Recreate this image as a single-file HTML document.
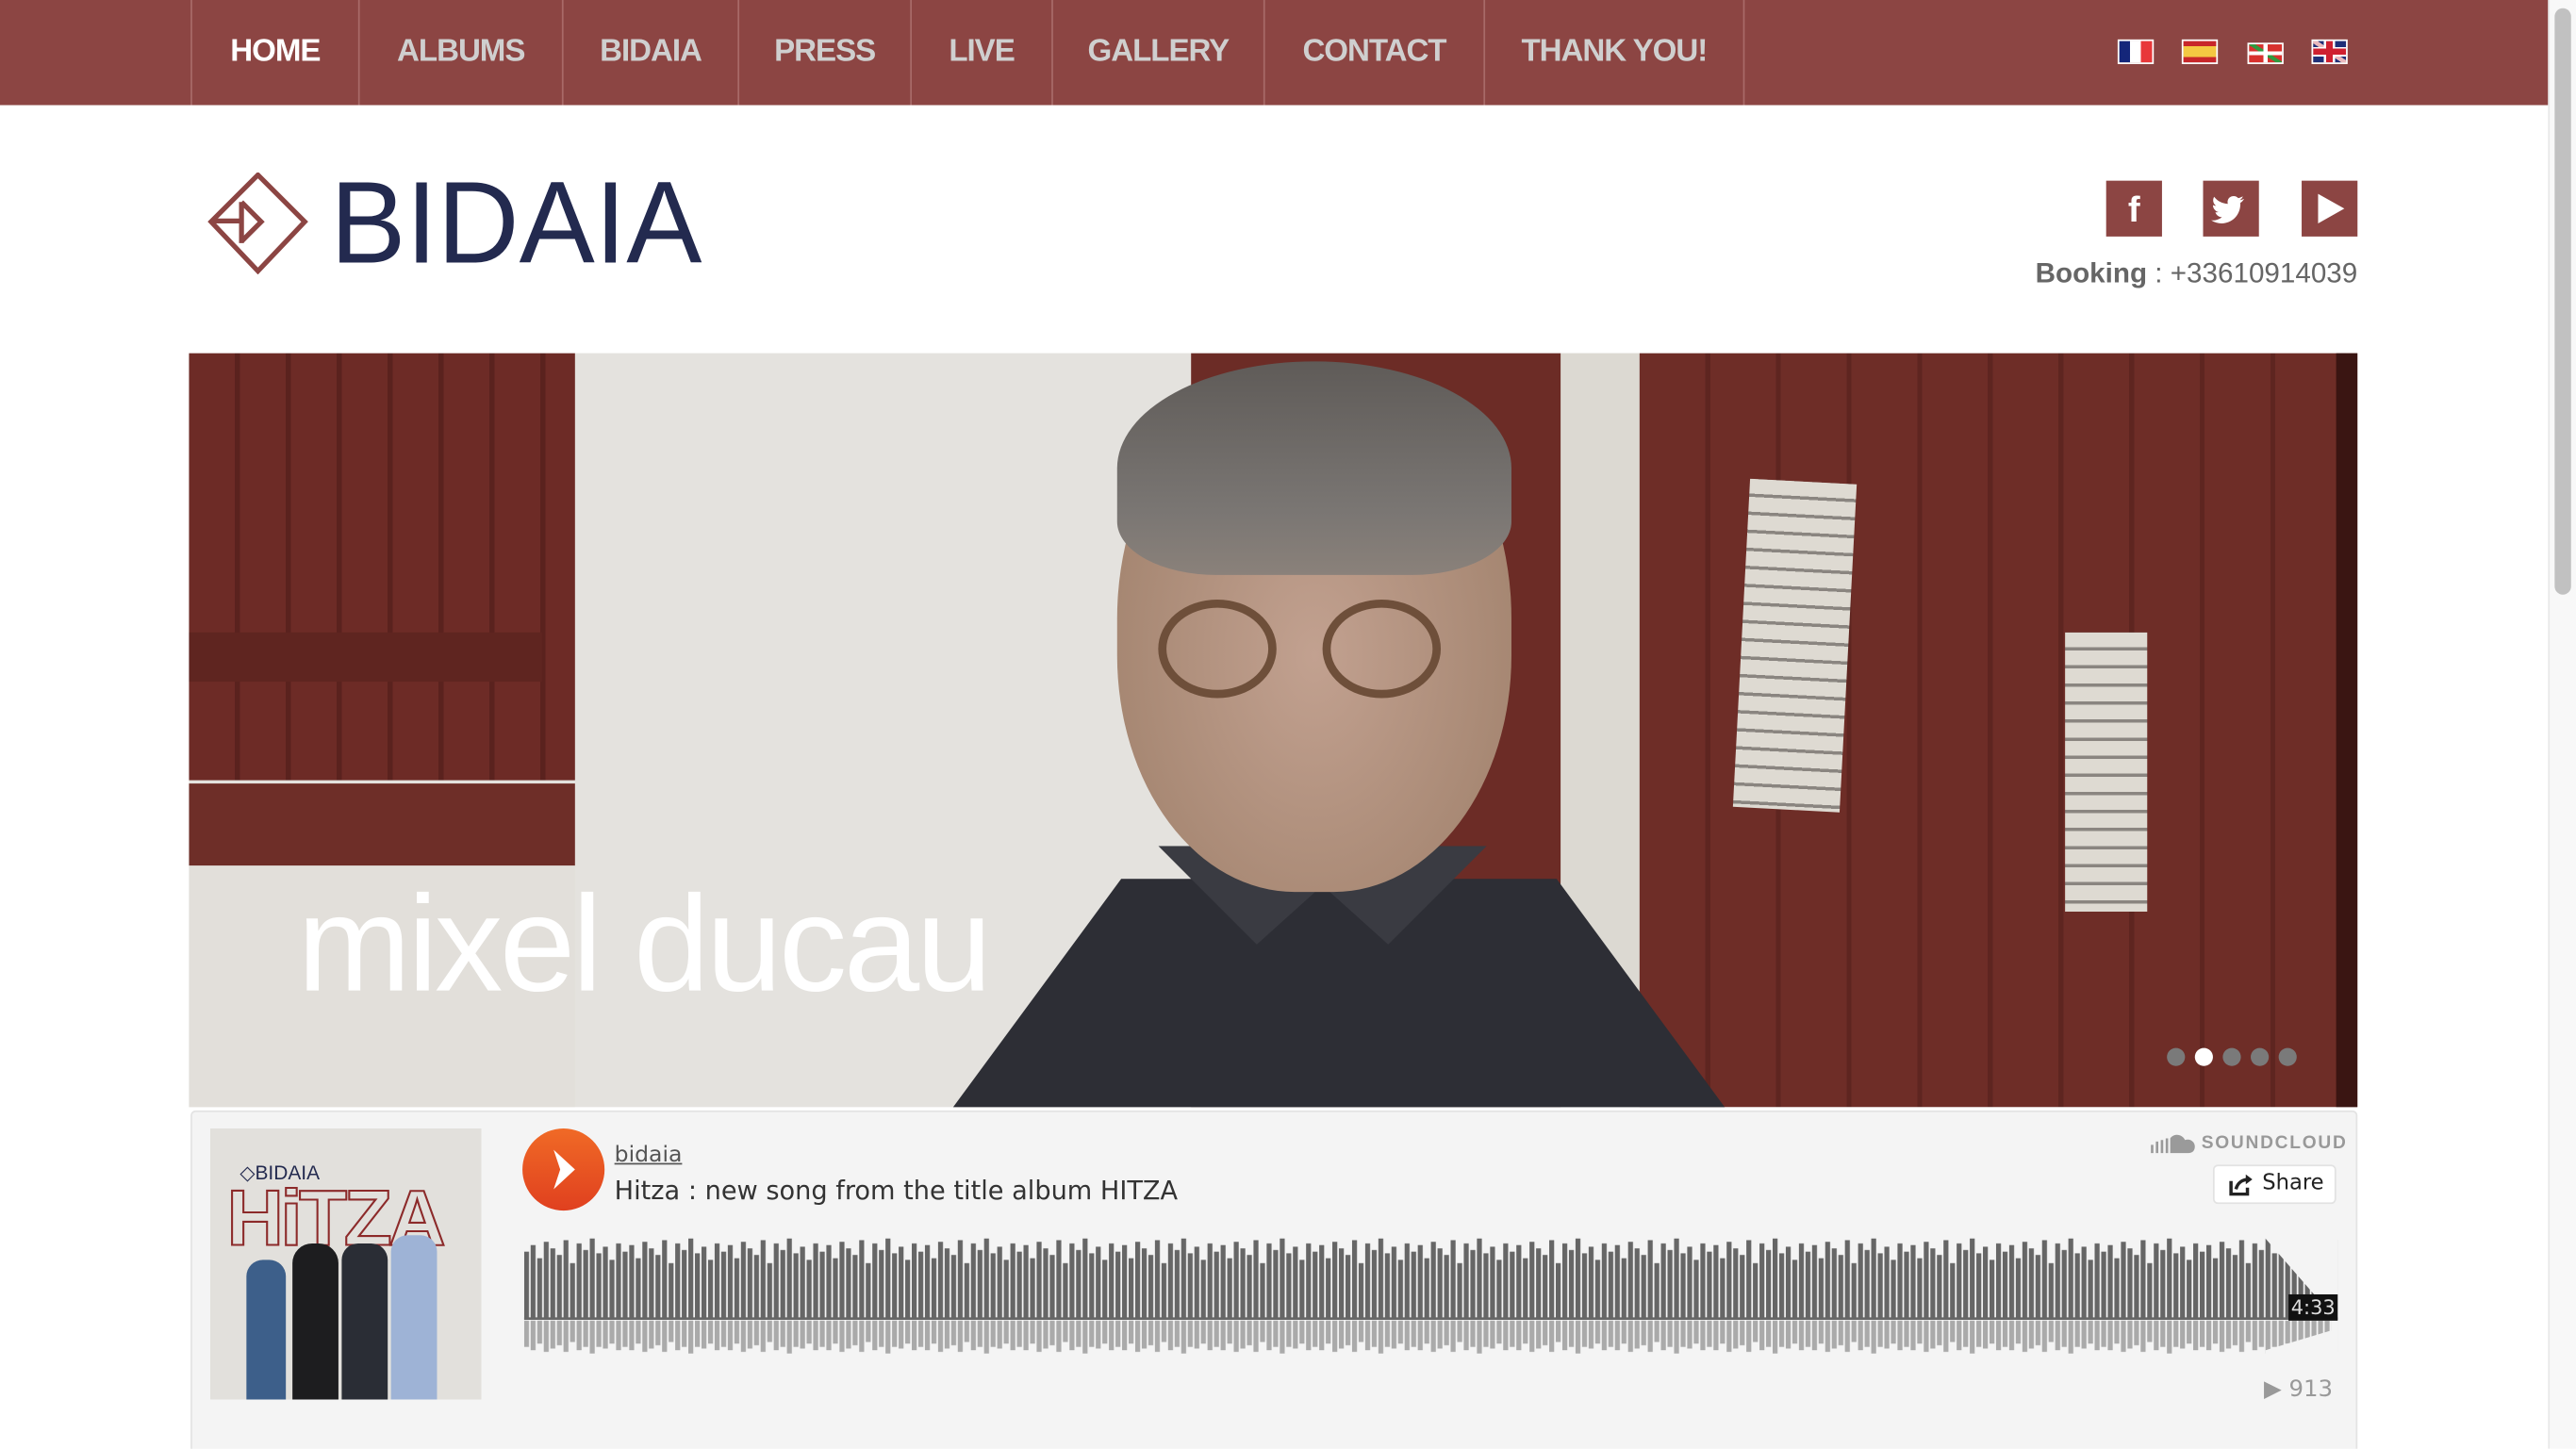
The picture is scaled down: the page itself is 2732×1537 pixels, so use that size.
<!DOCTYPE html>
<html><head><meta charset="utf-8">
<style>
*{margin:0;padding:0;box-sizing:border-box}
html,body{width:2732px;height:1536px;overflow:hidden;background:#fff}
#w{position:absolute;left:0;top:0;width:1568px;height:882px;transform:scale(1.74235);transform-origin:0 0;font-family:"Liberation Sans",sans-serif;overflow:hidden}
.a{position:absolute}
#nav{left:0;top:0;width:1551px;height:64px;background:#8c4543}
.ni{position:absolute;top:0;height:64px;border-left:1px solid #a86a68;color:#cfcfcf;font-weight:bold;font-size:19px;letter-spacing:-0.6px;text-align:center;line-height:64px}
.flag{position:absolute;top:24px;width:22px;height:15px;border:1.5px solid #fff}
.soc{position:absolute;top:110px;width:34px;height:34px;background:#8c4543}
</style></head><body><div id="w">

<div class="a" id="nav">
 <div class="ni" style="left:116px;width:102px;color:#fff">HOME</div>
 <div class="ni" style="left:218px;width:124px">ALBUMS</div>
 <div class="ni" style="left:342px;width:107px">BIDAIA</div>
 <div class="ni" style="left:449px;width:105px">PRESS</div>
 <div class="ni" style="left:554px;width:86px">LIVE</div>
 <div class="ni" style="left:640px;width:129px">GALLERY</div>
 <div class="ni" style="left:769px;width:134px">CONTACT</div>
 <div class="ni" style="left:903px;width:159px;border-right:1px solid #a86a68">THANK YOU!</div>
 <div class="flag" style="left:1289px;background:linear-gradient(90deg,#14267a 33%,#fff 33%,#fff 66%,#e8383a 66%)"></div>
 <div class="flag" style="left:1328px;background:linear-gradient(#c8262a 25%,#f4c842 25%,#f4c842 75%,#c8262a 75%)"></div>
 <div class="flag" style="left:1368px;top:26px;height:13px;background:linear-gradient(90deg,transparent 44%,#fff 44%,#fff 56%,transparent 56%),linear-gradient(transparent 40%,#fff 40%,#fff 60%,transparent 60%),linear-gradient(33deg,#d8312e 44%,#2e9a3e 44%,#2e9a3e 56%,#d8312e 56%)"></div>
 <div class="flag" style="left:1407px;background:linear-gradient(90deg,transparent 40%,#cf2030 40%,#cf2030 60%,transparent 60%),linear-gradient(transparent 36%,#cf2030 36%,#cf2030 64%,transparent 64%),linear-gradient(90deg,transparent 33%,#fff 33%,#fff 67%,transparent 67%),linear-gradient(transparent 28%,#fff 28%,#fff 72%,transparent 72%),linear-gradient(34deg,#1f2f78 44%,#e9b9bd 44%,#e9b9bd 56%,#1f2f78 56%)"></div>
</div>

<div class="a" style="left:1551px;top:0;width:17px;height:882px;background:#f8f8f8;border-left:1px solid #e8e8e8"></div>
<div class="a" style="left:1555px;top:5px;width:10px;height:357px;background:#c1c1c1;border-radius:5px"></div>

<svg class="a" style="left:126px;top:105px" width="62" height="62" viewBox="0 0 62 62">
 <path d="M31 1.5 L59.5 30 L31 60 L2.5 30 Z" fill="none" stroke="#8c4543" stroke-width="3"/>
 <path d="M4 29.5 L21 29.5 M21 18 L21 43 M21 18 L33 30 L21 42" fill="none" stroke="#8c4543" stroke-width="3"/>
</svg>
<div class="a" style="left:201px;top:97px;font-size:69px;color:#232a4f;letter-spacing:0px;line-height:76px;transform:scaleY(1.03);transform-origin:0 0">BIDAIA</div>

<div class="soc" style="left:1282px"><div style="color:#fff;font-weight:bold;font-size:22px;text-align:center;line-height:36px">f</div></div>
<div class="soc" style="left:1341px"><svg width="34" height="34" viewBox="0 0 34 34"><path d="M25 11c-1 .5-1.8.7-2.6.8.9-.6 1.5-1.3 1.8-2.3-.9.5-1.8.9-2.8 1.1-1.8-2-5.4-1.5-6.3 1.2-.3.8-.2 1.6 0 2.3-3.6-.2-6.4-1.8-8.4-4.3-1.1 2-.5 4.2 1.2 5.5-.7 0-1.3-.2-1.9-.5 0 2.1 1.5 3.8 3.4 4.3-.6.2-1.3.2-1.9.1.5 1.7 2.2 3 4 3-1.9 1.5-4.3 2.2-6.6 1.9 7.9 5 18.2-.3 17.8-10.6.9-.6 1.7-1.5 2.3-2.5z" fill="#fff"/></svg></div>
<div class="soc" style="left:1401px"><svg width="34" height="34"><path d="M10 8 L26 17 L10 26Z" fill="#fff"/></svg></div>
<div class="a" style="right:133px;top:157px;font-size:17px;color:#666;white-space:nowrap"><b>Booking</b> : +33610914039</div>

<div class="a" style="left:115px;top:215px;width:1320px;height:459px;overflow:hidden;background:#e4e2de">
 <div class="a" style="left:0;top:0;width:235px;height:260px;background:repeating-linear-gradient(90deg,#6d2b26 0,#6d2b26 28px,#5a221e 28px,#5a221e 31px)"></div>
 <div class="a" style="left:0;top:170px;width:215px;height:30px;background:#5f2520"></div>
 <div class="a" style="left:0;top:262px;width:235px;height:50px;background:#6e2e28"></div>
 <div class="a" style="left:0;top:312px;width:235px;height:147px;background:#e2dfda"></div>
 <div class="a" style="left:610px;top:0;width:225px;height:459px;background:#6c2c26"></div>
 <div class="a" style="left:835px;top:0;width:48px;height:459px;background:#dcd9d2"></div>
 <div class="a" style="left:883px;top:0;width:437px;height:459px;background:repeating-linear-gradient(90deg,#6e2d27 0,#6e2d27 40px,#5e2520 40px,#5e2520 43px)"></div>
 <div class="a" style="left:1307px;top:0;width:13px;height:459px;background:#3a1512"></div>
 <div class="a" style="left:945px;top:78px;width:65px;height:200px;background:repeating-linear-gradient(#dedad2 0,#dedad2 9px,#8a8580 9px,#8a8580 11px);transform:rotate(3deg)"></div>
 <div class="a" style="left:1142px;top:170px;width:50px;height:170px;background:repeating-linear-gradient(#dedad2 0,#dedad2 9px,#8a8580 9px,#8a8580 11px)"></div>
 <div class="a" style="left:435px;top:300px;width:530px;height:200px;background:#2d2e35;clip-path:polygon(25% 10%,75% 10%,100% 100%,0 100%);"></div>
 <div class="a" style="left:590px;top:300px;width:200px;height:60px;background:#3a3b42;clip-path:polygon(0 0,100% 0,70% 100%,50% 40%,30% 100%)"></div>
 <div class="a" style="left:565px;top:8px;width:240px;height:320px;border-radius:48% 48% 45% 45%;background:radial-gradient(ellipse at 50% 55%,#c2a190,#a3846f 80%)"></div>
 <div class="a" style="left:565px;top:5px;width:240px;height:130px;border-radius:50% 50% 25% 25%;background:linear-gradient(#5f5b58,#7a7673 70%,#8a817a)"></div>
 <div class="a" style="left:590px;top:150px;width:72px;height:60px;border-radius:50%;border:5px solid #6e4f3a"></div>
 <div class="a" style="left:690px;top:150px;width:72px;height:60px;border-radius:50%;border:5px solid #6e4f3a"></div>
 <div class="a" style="left:66px;top:310px;font-size:83px;color:#fff;letter-spacing:-2px;line-height:100px">mixel ducau</div>
 <div class="a" style="left:1204px;top:423px;width:11px;height:11px;border-radius:50%;background:#7a7a7a"></div>
 <div class="a" style="left:1221px;top:423px;width:11px;height:11px;border-radius:50%;background:#fff"></div>
 <div class="a" style="left:1238px;top:423px;width:11px;height:11px;border-radius:50%;background:#7a7a7a"></div>
 <div class="a" style="left:1255px;top:423px;width:11px;height:11px;border-radius:50%;background:#7a7a7a"></div>
 <div class="a" style="left:1272px;top:423px;width:11px;height:11px;border-radius:50%;background:#7a7a7a"></div>
</div>

<div class="a" style="left:116px;top:676px;width:1319px;height:220px;background:#f4f4f4;border:1px solid #e3e3e3;border-radius:3px"></div>
<div class="a" style="left:128px;top:687px;width:165px;height:165px;background:#e2e0dc;overflow:hidden">
 <div class="a" style="left:18px;top:20px;font-size:12px;color:#232a4f">◇BIDAIA</div>
 <div class="a" style="left:10px;top:28px;font-size:48px;font-weight:bold;color:transparent;-webkit-text-stroke:1.2px #8c2a2a;letter-spacing:-2px">HiTZA</div>
 <div class="a" style="left:22px;top:80px;width:24px;height:85px;background:#3d5f8a;border-radius:10px 10px 0 0"></div>
 <div class="a" style="left:50px;top:70px;width:28px;height:95px;background:#1d1d1f;border-radius:12px 12px 0 0"></div>
 <div class="a" style="left:80px;top:70px;width:28px;height:95px;background:#2a2d35;border-radius:10px 10px 0 0"></div>
 <div class="a" style="left:110px;top:65px;width:28px;height:100px;background:#9eb3d6;border-radius:10px 10px 0 0"></div>
</div>
<div class="a" style="left:318px;top:687px;width:50px;height:50px;border-radius:50%;background:linear-gradient(#f06a26,#e0401f)"><svg width="50" height="50"><path d="M19 13 L32 25 L19 37 L23 25Z" fill="#fff"/></svg></div>
<div class="a" style="left:374px;top:695px;font-size:13.5px;color:#555;text-decoration:underline;font-family:'DejaVu Sans',sans-serif">bidaia</div>
<div class="a" style="left:374px;top:716px;font-size:15.6px;color:#333;font-family:'DejaVu Sans',sans-serif">Hitza : new song from the title album HITZA</div>
<svg class="a" style="left:1309px;top:688px" width="28" height="16"><path d="M1 9v5M4 7v7M7 6v8M10 5v9" stroke="#9a9a9a" stroke-width="1.5"/><path d="M12 14V5c2-3 7-3 9 1 3-1 6 1 6 4s-2 4-4 4Z" fill="#9a9a9a"/></svg>
<div class="a" style="left:1340px;top:690px;font-size:11px;font-weight:bold;color:#999;letter-spacing:1px">SOUNDCLOUD</div>
<div class="a" style="left:1347px;top:709px;width:75px;height:24px;background:#fff;border:1px solid #e2e2e2;border-radius:3px;font-size:13px;color:#222;line-height:22px;padding-left:29px;font-family:'DejaVu Sans',sans-serif">Share
 <svg class="a" style="left:8px;top:4px" width="16" height="14"><path d="M2 5v8h10v-4" fill="none" stroke="#222" stroke-width="2"/><path d="M5 10c1-4 4-6 8-6" fill="none" stroke="#222" stroke-width="2"/><path d="M11 1l4 3-4 3z" fill="#222"/></svg></div>
<svg class="a" style="left:319px;top:750px" width="1104" height="76">
 <defs>
 <pattern id="p" width="60" height="76" patternUnits="userSpaceOnUse">
  <g fill="#666">
  <rect x="0" y="12" width="3" height="41"/><rect x="4" y="8" width="3" height="45"/><rect x="8" y="16" width="3" height="37"/><rect x="12" y="6" width="3" height="47"/><rect x="16" y="10" width="3" height="43"/><rect x="20" y="14" width="3" height="39"/><rect x="24" y="5" width="3" height="48"/><rect x="28" y="19" width="3" height="34"/><rect x="32" y="7" width="3" height="46"/><rect x="36" y="11" width="3" height="42"/><rect x="40" y="4" width="3" height="49"/><rect x="44" y="13" width="3" height="40"/><rect x="48" y="9" width="3" height="44"/><rect x="52" y="17" width="3" height="36"/><rect x="56" y="7" width="3" height="46"/>
  </g>
  <g fill="#aaa">
  <rect x="0" y="54" width="3" height="16"/><rect x="4" y="54" width="3" height="18"/><rect x="8" y="54" width="3" height="14"/><rect x="12" y="54" width="3" height="19"/><rect x="16" y="54" width="3" height="17"/><rect x="20" y="54" width="3" height="15"/><rect x="24" y="54" width="3" height="19"/><rect x="28" y="54" width="3" height="13"/><rect x="32" y="54" width="3" height="18"/><rect x="36" y="54" width="3" height="16"/><rect x="40" y="54" width="3" height="20"/><rect x="44" y="54" width="3" height="16"/><rect x="48" y="54" width="3" height="17"/><rect x="52" y="54" width="3" height="14"/><rect x="56" y="54" width="3" height="18"/>
  </g>
 </pattern>
 </defs>
 <rect x="0" y="0" width="1104" height="76" fill="url(#p)"/>
 <path d="M1060 0 L1104 0 L1104 76 L1060 76 L1060 72 L1100 60 L1100 50 L1060 4Z" fill="#f4f4f4"/>
 <rect x="0" y="52" width="1104" height="1.5" fill="#666"/>
 <rect x="1074" y="38" width="30" height="16" fill="#111"/>
 <text x="1089" y="50" font-size="12" fill="#ddd" text-anchor="middle" font-family="DejaVu Sans, sans-serif">4:33</text>
</svg>
<div class="a" style="left:1378px;top:838px;font-size:14px;color:#999;font-family:'DejaVu Sans',sans-serif">▶ 913</div>

</div></body></html>
